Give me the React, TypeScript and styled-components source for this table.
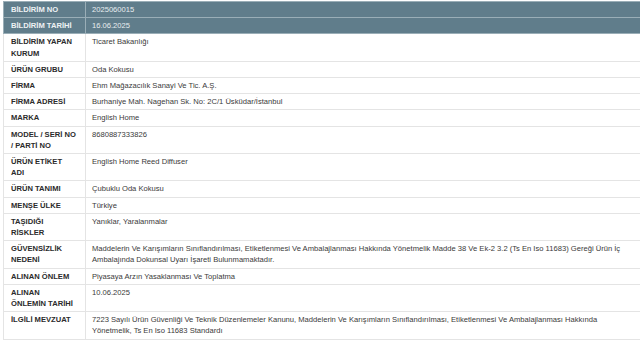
import React from "react";
import styled, { createGlobalStyle } from "styled-components";

const GlobalStyle = createGlobalStyle`
  html, body {
    margin: 0;
    padding: 0;
    background: #ffffff;
  }
  body {
    font-family: "Liberation Sans", Arial, sans-serif;
  }
`;

interface Row {
  label: string;
  value: string;
  head?: boolean;
}

const rows: Row[] = [
  { label: "BİLDİRİM NO", value: "2025060015", head: true },
  { label: "BİLDİRİM TARİHİ", value: "16.06.2025", head: true },
  { label: "BİLDİRİM YAPAN KURUM", value: "Ticaret Bakanlığı" },
  { label: "ÜRÜN GRUBU", value: "Oda Kokusu" },
  { label: "FİRMA", value: "Ehm Mağazacılık Sanayi Ve Tic. A.Ş." },
  {
    label: "FİRMA ADRESİ",
    value: "Burhaniye Mah. Nagehan Sk. No: 2C/1 Üsküdar/İstanbul",
  },
  { label: "MARKA", value: "English Home" },
  { label: "MODEL / SERİ NO / PARTİ NO", value: "8680887333826" },
  { label: "ÜRÜN ETİKET ADI", value: "English Home Reed Diffuser" },
  { label: "ÜRÜN TANIMI", value: "Çubuklu Oda Kokusu" },
  { label: "MENŞE ÜLKE", value: "Türkiye" },
  { label: "TAŞIDIĞI RİSKLER", value: "Yanıklar, Yaralanmalar" },
  {
    label: "GÜVENSİZLİK NEDENİ",
    value:
      "Maddelerin Ve Karışımların Sınıflandırılması, Etiketlenmesi Ve Ambalajlanması Hakkında Yönetmelik Madde 38 Ve Ek-2 3.2 (Ts En Iso 11683) Gereği Ürün İç Ambalajında Dokunsal Uyarı İşareti Bulunmamaktadır.",
  },
  { label: "ALINAN ÖNLEM", value: "Piyasaya Arzın Yasaklanması Ve Toplatma" },
  { label: "ALINAN ÖNLEMİN TARİHİ", value: "10.06.2025" },
  {
    label: "İLGİLİ MEVZUAT",
    value:
      "7223 Sayılı Ürün Güvenliği Ve Teknik Düzenlemeler Kanunu, Maddelerin Ve Karışımların Sınıflandırılması, Etiketlenmesi Ve Ambalajlanması Hakkında Yönetmelik, Ts En Iso 11683 Standardı",
  },
];

const Page = styled.div`
  padding: 1px 0 0 3px;
  overflow: hidden;
`;

const Table = styled.table`
  width: 640px;
  border-collapse: collapse;
  table-layout: fixed;
  font-size: 7.6px;
  line-height: 11.2px;
`;

const Tr = styled.tr<{ $head?: boolean }>`
  background: ${(p) => (p.$head ? "#607d8b" : "#ffffff")};
`;

const Label = styled.td<{ $head?: boolean }>`
  width: 65px;
  padding: 2px 9px 2px 7px;
  vertical-align: top;
  font-weight: bold;
  color: ${(p) => (p.$head ? "#eef2f4" : "#2b2b2b")};
  border: 1px solid ${(p) => (p.$head ? "#9aaeb7" : "#e4e4e4")};
`;

const Value = styled.td<{ $head?: boolean }>`
  padding: 2px 8px 2px 6px;
  vertical-align: top;
  color: ${(p) => (p.$head ? "#e8edf0" : "#3a3a3a")};
  border: 1px solid ${(p) => (p.$head ? "#9aaeb7" : "#e4e4e4")};
`;

export default function App() {
  return (
    <Page>
      <GlobalStyle />
      <Table>
        <tbody>
          {rows.map((r) => (
            <Tr key={r.label} $head={r.head}>
              <Label $head={r.head}>{r.label}</Label>
              <Value $head={r.head}>{r.value}</Value>
            </Tr>
          ))}
        </tbody>
      </Table>
    </Page>
  );
}
